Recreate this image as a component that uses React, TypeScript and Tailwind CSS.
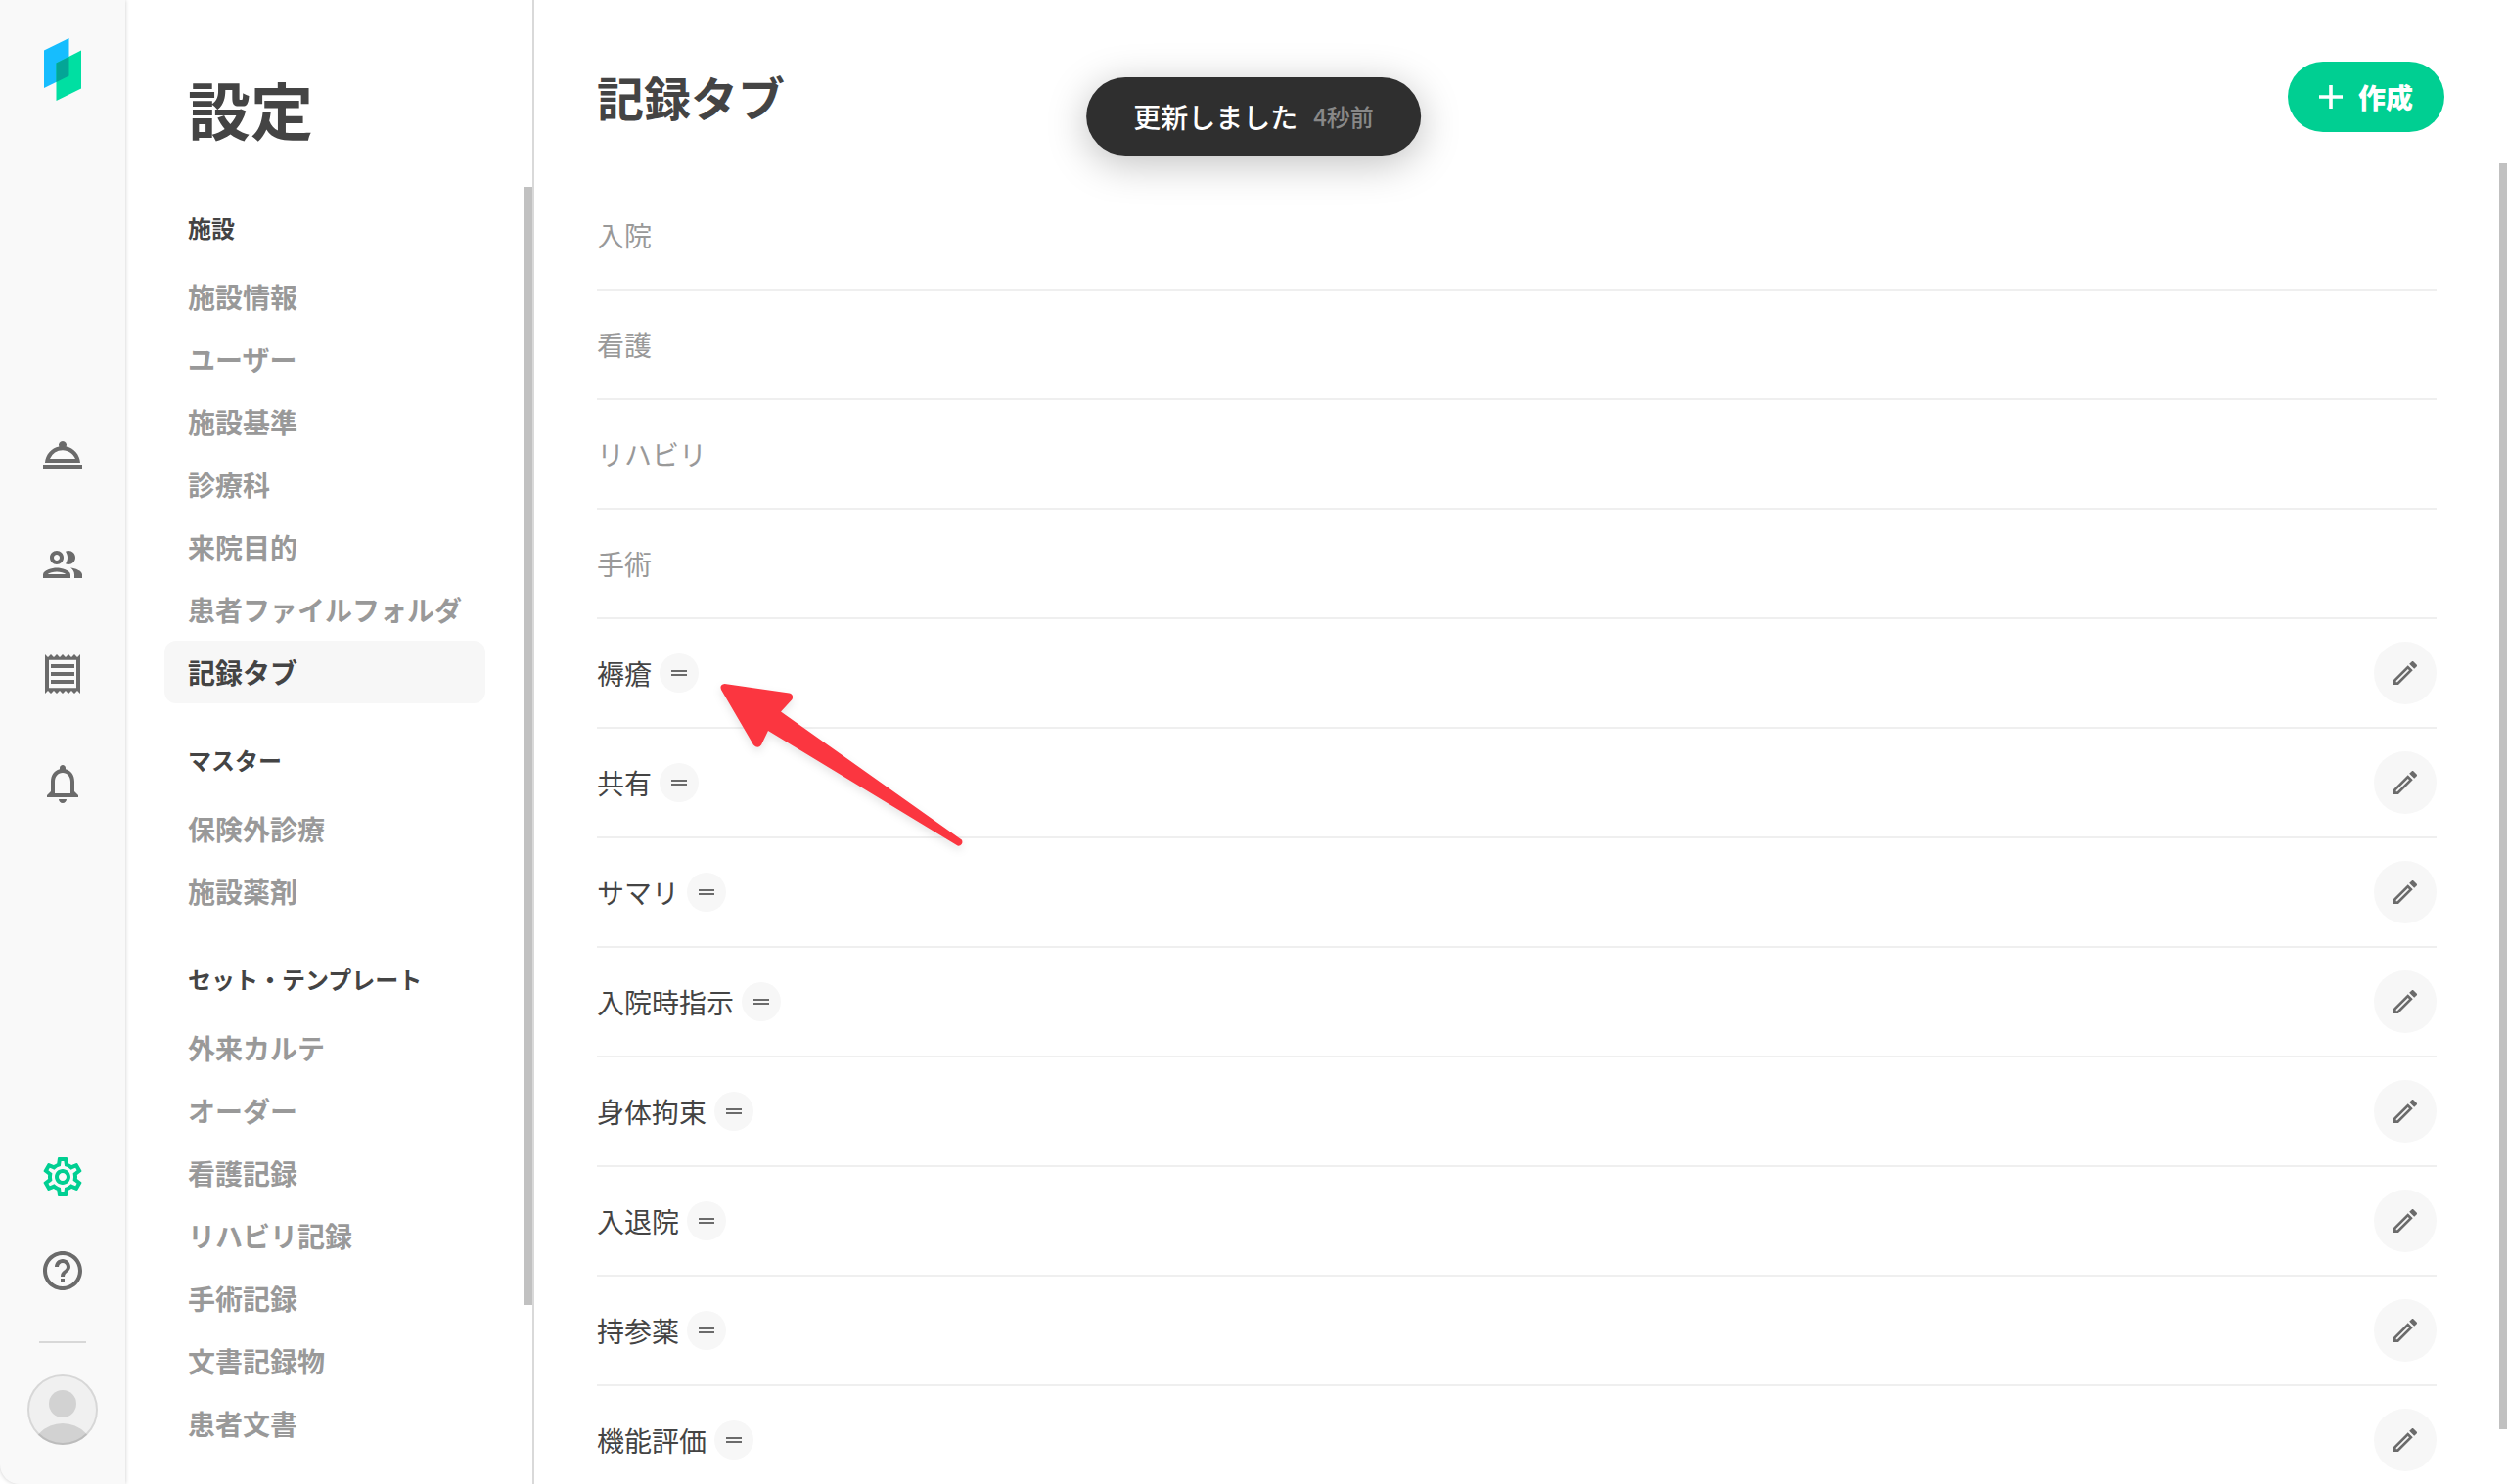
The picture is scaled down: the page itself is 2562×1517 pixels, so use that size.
import type { IconType } from "react-icons";
import {
  MdDragHandle,
  MdHelpOutline,
  MdOutlineEdit,
  MdOutlineNotifications,
  MdOutlinePeople,
  MdOutlineReceipt,
  MdOutlineRoomService,
  MdOutlineSettings,
} from "react-icons/md";

const MAIN_LINKS: { label: string; icon: IconType }[] = [
  { label: "受付", icon: MdOutlineRoomService },
  { label: "患者", icon: MdOutlinePeople },
  { label: "会計", icon: MdOutlineReceipt },
  { label: "通知", icon: MdOutlineNotifications },
];

const MENU = [
  {
    title: "施設",
    items: [
      "施設情報",
      "ユーザー",
      "施設基準",
      "診療科",
      "来院目的",
      "患者ファイルフォルダ",
      "記録タブ",
    ],
  },
  { title: "マスター", items: ["保険外診療", "施設薬剤"] },
  {
    title: "セット・テンプレート",
    items: [
      "外来カルテ",
      "オーダー",
      "看護記録",
      "リハビリ記録",
      "手術記録",
      "文書記録物",
      "患者文書",
    ],
  },
];

const ACTIVE_ITEM = "記録タブ";

const TABS = [
  { name: "入院", editable: false },
  { name: "看護", editable: false },
  { name: "リハビリ", editable: false },
  { name: "手術", editable: false },
  { name: "褥瘡", editable: true },
  { name: "共有", editable: true },
  { name: "サマリ", editable: true },
  { name: "入院時指示", editable: true },
  { name: "身体拘束", editable: true },
  { name: "入退院", editable: true },
  { name: "持参薬", editable: true },
  { name: "機能評価", editable: true },
];

function Logo() {
  return (
    <svg width="40" height="64" viewBox="0 0 40 64" aria-hidden="true">
      <path d="M1 12.5 26.5 0v38.5L1 51z" fill="#16bdfe" />
      <path d="M13.5 25.5 39 12.5v39L13.5 64z" fill="#00dfa2" />
      <path d="M13.5 25.5 26.5 18.9v19.6l-13 6.4z" fill="#04a596" />
    </svg>
  );
}

function Avatar() {
  return (
    <svg width="72" height="72" viewBox="0 0 72 72" aria-hidden="true">
      <clipPath id="avatar-clip">
        <circle cx="36" cy="36" r="36" />
      </clipPath>
      <g clipPath="url(#avatar-clip)">
        <rect width="72" height="72" fill="#f0f0f0" />
        <circle cx="36" cy="30" r="14" fill="#d2d2d2" />
        <circle cx="36" cy="83" r="33" fill="#d2d2d2" />
      </g>
      <circle cx="36" cy="36" r="35" fill="none" stroke="#000" strokeOpacity="0.1" strokeWidth="2" />
    </svg>
  );
}

function Rail() {
  return (
    <nav className="z-10 flex w-32 shrink-0 flex-col items-center rounded-bl-[20px] bg-[#f9f9f9] pt-[39px] pb-10 shadow-[0_0_4px_rgba(0,0,0,0.2)]">
      <a href="#home" aria-label="ホーム">
        <Logo />
      </a>
      <div className="mt-[338px] flex flex-col gap-16 text-[#6b6b6b]">
        {MAIN_LINKS.map(({ label, icon: Icon }) => (
          <a key={label} href={`#${label}`} aria-label={label}>
            <Icon size={48} />
          </a>
        ))}
      </div>
      <div className="mt-auto flex flex-col items-center text-[#6b6b6b]">
        <a href="#settings" aria-label="設定" className="text-[#00cf92]">
          <MdOutlineSettings size={48} />
        </a>
        <a href="#help" aria-label="ヘルプ" className="mt-12">
          <MdHelpOutline size={48} />
        </a>
        <hr className="mt-12 mb-8 w-12 border-t-2 border-[#d8d8d8]" />
        <button type="button" aria-label="アカウント">
          <Avatar />
        </button>
      </div>
    </nav>
  );
}

function Sidebar() {
  return (
    <aside className="flex w-[418px] shrink-0 flex-col border-r-2 border-[#d9d9d9]">
      <h1 className="h-[191px] px-16 pt-[62px] text-[64px] leading-[96px] font-bold">設定</h1>
      <div className="relative min-h-0 flex-1">
        <div className="flex h-full flex-col gap-10 overflow-hidden pt-6 pr-12 pl-10">
          {MENU.map((section) => (
            <section key={section.title}>
              <h2 className="mb-5 px-6 text-2xl leading-9 font-bold">{section.title}</h2>
              <ul>
                {section.items.map((item) => (
                  <li key={item}>
                    <a
                      href={`#${item}`}
                      className={
                        item === ACTIVE_ITEM
                          ? "block rounded-xl bg-[#f7f7f7] px-6 text-[28px] leading-16 font-bold"
                          : "block px-6 text-[28px] leading-16 font-bold whitespace-nowrap text-[#999]"
                      }
                    >
                      {item}
                    </a>
                  </li>
                ))}
              </ul>
            </section>
          ))}
        </div>
        <div className="absolute top-0 right-0 bottom-[183px] w-2 bg-[#c1c1c1]" />
      </div>
    </aside>
  );
}

function TabRow({ name, editable }: { name: string; editable: boolean }) {
  return (
    <li className="flex h-28 shrink-0 items-center border-b-2 border-[#efefef]">
      <span className={editable ? "text-[28px]" : "text-[28px] text-[#999]"}>{name}</span>
      {editable && (
        <>
          <button
            type="button"
            aria-label={`${name}を並び替え`}
            className="ml-2 flex size-10 items-center justify-center rounded-full bg-[#f7f7f7] text-[#6b6b6b]"
          >
            <MdDragHandle size={24} />
          </button>
          <button
            type="button"
            aria-label={`${name}を編集`}
            className="ml-auto flex size-16 items-center justify-center rounded-full bg-[#f7f7f7] text-[#6b6b6b]"
          >
            <MdOutlineEdit size={32} />
          </button>
        </>
      )}
    </li>
  );
}

function Toast() {
  return (
    <div
      role="status"
      className="absolute top-[79px] left-1/2 z-20 flex h-20 -translate-x-1/2 items-center gap-4 rounded-full bg-[#2f2f2f] px-12 font-medium whitespace-nowrap shadow-[0_8px_40px_rgba(0,0,0,0.25)]"
    >
      <span className="text-[28px] text-white">更新しました</span>
      <span className="text-2xl text-[#888]">4秒前</span>
    </div>
  );
}

function PointerArrow() {
  return (
    <svg
      className="absolute top-[680px] left-[720px] z-10 drop-shadow-[0_4px_4px_rgba(0,0,0,0.1)]"
      width="280"
      height="200"
      viewBox="0 0 280 200"
      aria-hidden="true"
    >
      <path
        d="M20.5 19 86.5 28.6Q91.5 30 89.5 35L78 47.5 262.8 178.6A4 4 0 0 1 258.6 184.6L65 67 58 81.5Q54.5 86 50 81.5L17 25Q15 20 20.5 19z"
        fill="#fb3640"
      />
    </svg>
  );
}

export default function App() {
  return (
    <div
      lang="ja"
      className="relative flex h-screen overflow-hidden bg-white font-['Noto_Sans_CJK_JP',sans-serif] text-[#444]"
    >
      <Rail />
      <Sidebar />
      <main className="flex min-w-0 flex-1 flex-col">
        <header className="flex h-[167px] shrink-0 items-start justify-between pt-[63px] pr-16 pl-16">
          <h2 className="text-5xl leading-[70px] font-bold">記録タブ</h2>
          <button
            type="button"
            className="flex h-[72px] items-center gap-4 rounded-full bg-[#00cf92] px-8 text-[28px] font-black text-white"
          >
            <svg width="24" height="24" viewBox="0 0 24 24" aria-hidden="true">
              <path d="M12 0v24M0 12h24" stroke="currentColor" strokeWidth="3.6" />
            </svg>
            作成
          </button>
        </header>
        <div className="relative min-h-0 flex-1">
          <ul className="flex h-full flex-col overflow-hidden pt-[18px] pr-[72px] pl-16">
            {TABS.map((tab) => (
              <TabRow key={tab.name} {...tab} />
            ))}
          </ul>
          <div className="absolute top-0 right-0 bottom-14 w-2 bg-[#c1c1c1]" />
        </div>
      </main>
      <Toast />
      <PointerArrow />
    </div>
  );
}
